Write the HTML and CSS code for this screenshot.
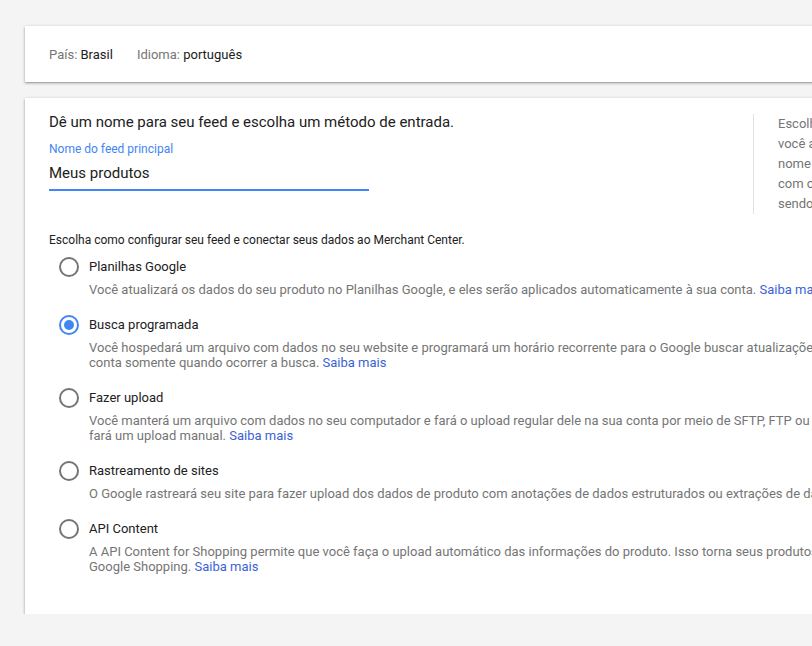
FILE: index.html
```html
<!DOCTYPE html>
<html lang="pt-BR">
<head>
<meta charset="utf-8">
<title>Feed principal</title>
<link rel="stylesheet" href="styles.css">
</head>
<body>
<div class="page">
  <section class="card card-info">
    <span class="meta"><span class="meta-key">País:</span> Brasil</span>
    <span class="meta"><span class="meta-key">Idioma:</span> português</span>
  </section>

  <section class="card card-form">
    <div class="top">
      <div class="name-col">
        <h2 class="heading">Dê um nome para seu feed e escolha um método de entrada.</h2>
        <label class="field-label">Nome do feed principal</label>
        <div class="field">Meus produtos</div>
      </div>
      <aside class="help">
        Escolha um nome exclusivo que ajude<br>
        você a identificar o feed. Esse<br>
        nome é usado somente na sua conta<br>
        com o objetivo de identificar o feed<br>
        sendo configurado.
      </aside>
    </div>

    <p class="intro">Escolha como configurar seu feed e conectar seus dados ao Merchant Center.</p>

    <div class="options">
      <div class="option">
        <span class="radio"></span>
        <div class="option-body">
          <div class="option-title">Planilhas Google</div>
          <div class="option-desc">Você atualizará os dados do seu produto no Planilhas Google, e eles serão aplicados automaticamente à sua conta. <a class="link">Saiba mais</a></div>
        </div>
      </div>
      <div class="option">
        <span class="radio checked"></span>
        <div class="option-body">
          <div class="option-title">Busca programada</div>
          <div class="option-desc">Você hospedará um arquivo com dados no seu website e programará um horário recorrente para o Google buscar atualizações. As atualizações serão aplicadas à sua<br>conta somente quando ocorrer a busca. <a class="link">Saiba mais</a></div>
        </div>
      </div>
      <div class="option">
        <span class="radio"></span>
        <div class="option-body">
          <div class="option-title">Fazer upload</div>
          <div class="option-desc">Você manterá um arquivo com dados no seu computador e fará o upload regular dele na sua conta por meio de SFTP, FTP ou Google Cloud Storage ou<br>fará um upload manual. <a class="link">Saiba mais</a></div>
        </div>
      </div>
      <div class="option">
        <span class="radio"></span>
        <div class="option-body">
          <div class="option-title">Rastreamento de sites</div>
          <div class="option-desc">O Google rastreará seu site para fazer upload dos dados de produto com anotações de dados estruturados ou extrações de dados em alto nível. <a class="link">Saiba mais</a></div>
        </div>
      </div>
      <div class="option">
        <span class="radio"></span>
        <div class="option-body">
          <div class="option-title">API Content</div>
          <div class="option-desc">A API Content for Shopping permite que você faça o upload automático das informações do produto. Isso torna seus produtos mais fáceis de encontrar no<br>Google Shopping. <a class="link">Saiba mais</a></div>
        </div>
      </div>
    </div>
  </section>
</div>
</body>
</html>
```

FILE: styles.css
```css
html, body {
  margin: 0;
  padding: 0;
  overflow: hidden;
  background: #f4f4f4;
}

body {
  font-family: Roboto, "Noto Sans", Arial, sans-serif;
  color: #212121;
}

.page {
  width: 1200px;
  padding: 26px 0 0 25px;
  display: flex;
  flex-direction: column;
  gap: 16px;
}

.card {
  background: #fff;
  box-shadow: 0 1px 3px rgba(0, 0, 0, 0.32), 0 1px 1px rgba(0, 0, 0, 0.12);
}

.card-info {
  height: 56px;
  box-sizing: border-box;
  padding: 0 24px;
  display: flex;
  align-items: center;
  gap: 24px;
  font-size: 13px;
  color: #212121;
}

.meta-key {
  color: #757575;
}

.card-form {
  padding: 14px 24px 40px;
}

.top {
  display: flex;
  align-items: flex-start;
}

.name-col {
  width: 704px;
}

.heading {
  margin: 0;
  font-size: 15px;
  font-weight: 400;
  line-height: 20px;
  color: #212121;
}

.field-label {
  display: block;
  margin-top: 9px;
  font-size: 12px;
  line-height: 16px;
  color: #4285f4;
}

.field {
  width: 320px;
  font-size: 15px;
  line-height: 20px;
  padding: 6px 0 6px;
  border-bottom: 2px solid #4285f4;
  color: #212121;
}

.help {
  margin-top: 2px;
  border-left: 1px solid #e0e0e0;
  padding: 0 0 0 24px;
  font-size: 13px;
  line-height: 20px;
  color: #757575;
  white-space: nowrap;
}

.intro {
  margin: 18px 0 0;
  font-size: 12px;
  line-height: 16px;
  color: #212121;
}

.options {
  margin-top: 9px;
  padding-left: 10px;
  display: flex;
  flex-direction: column;
  gap: 18px;
}

.option {
  display: flex;
  align-items: flex-start;
  gap: 10px;
}

.radio {
  flex: none;
  width: 20px;
  height: 20px;
  box-sizing: border-box;
  border: 2px solid #757575;
  border-radius: 50%;
  position: relative;
}

.radio.checked {
  border-color: #4285f4;
}

.radio.checked::after {
  content: "";
  position: absolute;
  left: 3px;
  top: 3px;
  width: 10px;
  height: 10px;
  border-radius: 50%;
  background: #4285f4;
}

.option-title {
  font-size: 13px;
  line-height: 20px;
  color: #212121;
}

.option-desc {
  margin-top: 5px;
  font-size: 13px;
  line-height: 15px;
  color: #757575;
  white-space: nowrap;
}

.link {
  color: #3b62d4;
  text-decoration: none;
  cursor: pointer;
}
```
